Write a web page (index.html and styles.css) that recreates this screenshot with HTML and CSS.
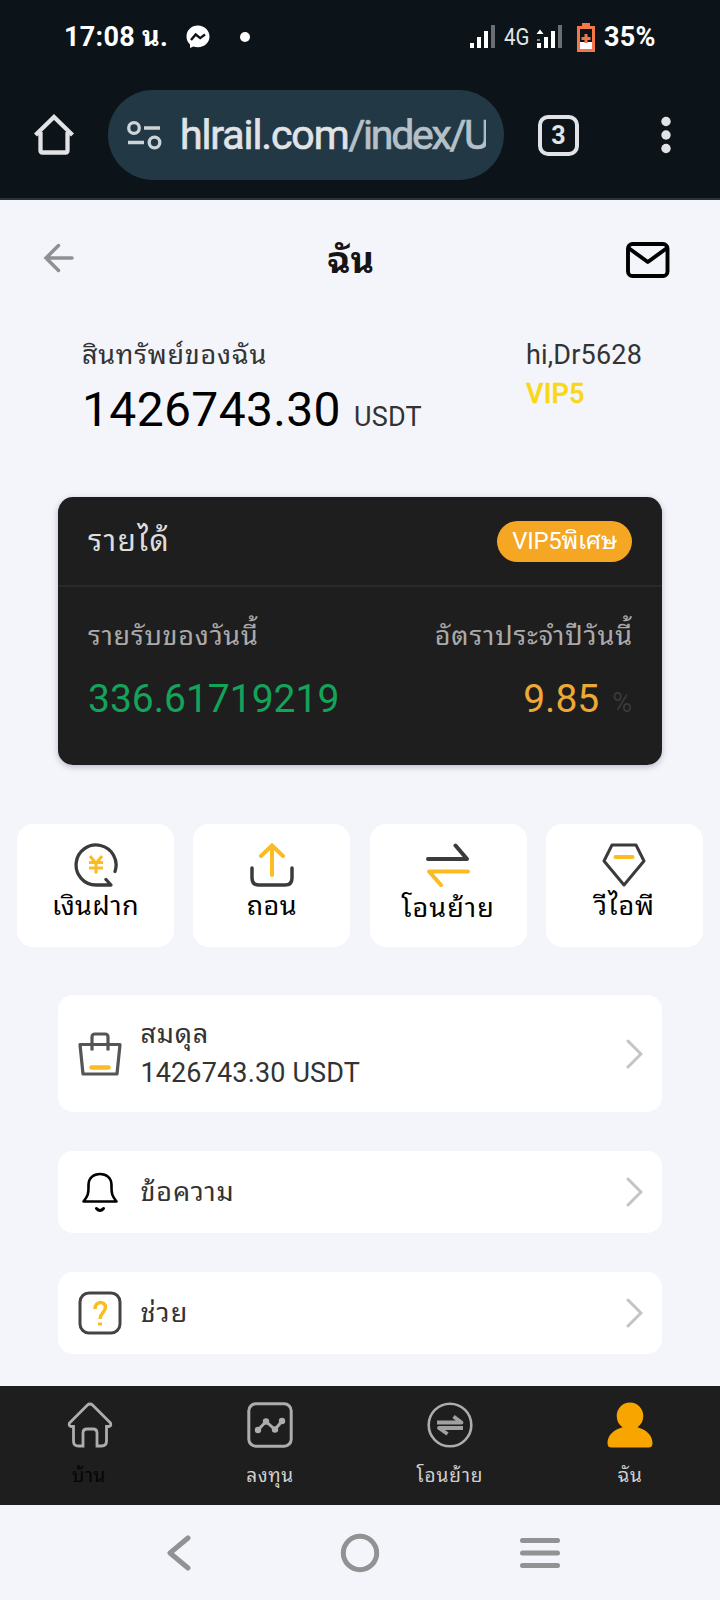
FILE: index.html
```html
<!DOCTYPE html>
<html lang="th">
<head>
<meta charset="utf-8">
<title>ฉัน</title>
<link rel="stylesheet" href="styles.css">
</head>
<body>
<div class="status">
  <span class="clock">17:08 น.</span>
  <svg class="messenger" width="24" height="24" viewBox="0 0 24 24"><path fill="#fff" d="M12 .5C5.400.500.5 5.200.5 11.500c0 3.300 1.300 6 3.500 8v3.500l3.300-1.500c1.400.500 3 .700 4.700.700 6.600 0 11.500-4.700 11.500-10.700S18.600.5 12 .5z"/><path d="M5 15l4.700-5.500 4.500 3.600L19 9.500" fill="none" stroke="#0c1419" stroke-width="2.400"/></svg>
  <i class="dot"></i>
  <svg class="sig1" width="26" height="24" viewBox="0 0 26 24"><g fill="#fff"><path d="M0 18h4v5H0zM7 12h4v11H7zM14 6h4v17h-4z"/><path fill="#6a6e72" d="M21 0h4v23h-4z"/></g></svg>
  <span class="net">4G</span>
  <svg class="sig2" width="27" height="24" viewBox="0 0 27 24"><g fill="#fff"><path d="M4 4.500l3.500 4.500h-7zM1 18h4v5H1zM8 12h4v11H8zM15 6h4v17h-4z"/><path d="M1 14.500h3v1H1z"/><path fill="#6a6e72" d="M22 0h4v23h-4z"/></g></svg>
  <svg class="battery" width="18" height="29" viewBox="0 0 18 29"><path fill="#f4774a" d="M5 0h8v3h5v26H0V3h5z"/><path fill="#0c1419" d="M3 6h12v13H3z"/><path fill="#fff" d="M3 19h12v7H3z"/><path fill="#f4774a" d="M7.500 11h3v3h3v3h-3v3h-3v-3h-3v-3h3z"/></svg>
  <span class="percent">35%</span>
</div>
<div class="toolbar">
  <svg class="chrome-home" width="42" height="42" viewBox="0 0 42 42"><path d="M2.500 21L21 3l18.500 18M7.500 18v18.500q0 2 2 2h23q2 0 2-2V18" fill="none" stroke="#e1e3e6" stroke-width="4.300"/></svg>
  <div class="address">
    <svg width="36" height="30" viewBox="0 0 36 30"><g fill="none" stroke="#cdd4d9" stroke-width="3.300"><circle cx="8" cy="8" r="5.300"/><path d="M18 8h16M2 22.500h16"/><circle cx="28.500" cy="22.500" r="5.300"/></g></svg>
    <div class="url">hlrail.com<span>/index/U</span></div>
  </div>
  <div class="tabs">3</div>
  <svg class="menu" width="12" height="38" viewBox="0 0 12 38"><g fill="#e1e3e6"><circle cx="6" cy="5.500" r="4.700"/><circle cx="6" cy="19" r="4.700"/><circle cx="6" cy="32.500" r="4.700"/></g></svg>
</div>

<main class="page">
  <header class="header">
    <svg class="back" width="32" height="30" viewBox="0 0 32 30"><path d="M15.500 2.500L3 15l12.500 12.500M3 15h26" fill="none" stroke="#8f9093" stroke-width="3.500" stroke-linecap="round"/></svg>
    <h1>ฉัน</h1>
    <svg class="mail" width="44" height="36" viewBox="0 0 44 36"><g fill="none" stroke="#000" stroke-width="3.900" stroke-linejoin="round"><rect x="2" y="2" width="39.500" height="32" rx="4.500"/><path d="M2.500 6l19.300 14L41 6"/></g></svg>
  </header>

  <section class="account">
    <div class="assets">
      <div class="label">สินทรัพย์ของฉัน</div>
      <div class="total">1426743.30<span>USDT</span></div>
    </div>
    <div class="user">
      <div>hi,Dr5628</div>
      <b>VIP5</b>
    </div>
  </section>

  <section class="income">
    <div class="income-top"><span class="income-title">รายได้</span><span class="badge">VIP5พิเศษ</span></div>
    <div class="income-body">
      <div><div class="caption cap-left">รายรับของวันนี้</div><div class="figure green">336.61719219</div></div>
      <div class="right"><div class="caption cap-right">อัตราประจำปีวันนี้</div><div class="figure amber">9.85<span>%</span></div></div>
    </div>
  </section>

  <nav class="actions">
    <a><svg width="44" height="44" viewBox="0 0 44 44"><g fill="none" stroke="#3b3b3b" stroke-width="3.300" stroke-linecap="round" stroke-linejoin="round"><path d="M41 28.500A20 20 0 1 0 22 42h15l-5-5.500"/></g><path d="M16 13l6 7.500 6-7.500M22 20v10.500M15 19.500h14M15 25h14" fill="none" stroke="#fbbc23" stroke-width="3"/></svg><span class="t1">เงินฝาก</span></a>
    <a><svg width="44" height="44" viewBox="0 0 44 44"><path d="M2 25v10q0 7 7 7h26q7 0 7-7V25" fill="none" stroke="#3b3b3b" stroke-width="3.500" stroke-linecap="round"/><path d="M22 32V3M11 13L22 2.500 33 13" fill="none" stroke="#fbbc23" stroke-width="4" stroke-linecap="round"/></svg><span class="t2">ถอน</span></a>
    <a><svg width="44" height="44" viewBox="0 0 44 44"><g fill="none" stroke-width="4" stroke-linecap="round" stroke-linejoin="round"><path stroke="#3b3b3b" d="M2 16h39L29.500 2.500"/><path stroke="#fbbc23" d="M42 28.500H3L15 42"/></g></svg><span class="t3">โอนย้าย</span></a>
    <a><svg width="44" height="44" viewBox="0 0 44 44"><path d="M10 2h24l8 16-20 24L2 18z" fill="none" stroke="#3b3b3b" stroke-width="3" stroke-linejoin="round"/><path d="M13.500 14h17" stroke="#fbbc23" stroke-width="4" stroke-linecap="round"/></svg><span class="t4">วีไอพี</span></a>
  </nav>

  <section class="rows">
    <a class="row tall">
      <svg class="icon" width="44" height="44" viewBox="0 0 44 44"><g fill="none" stroke="#555" stroke-width="3.200" stroke-linejoin="round"><path d="M2 12.500h40L39 42H5z"/><path d="M14 18.500V5q0-3 3-3h10q3 0 3 3v13.500"/></g><path d="M13.500 35.500h17" stroke="#fbbc23" stroke-width="4.500" stroke-linecap="round"/></svg>
      <div class="text"><div class="r1">สมดุล</div><div class="amount">1426743.30 USDT</div></div>
      <svg class="chevron" width="17" height="30" viewBox="0 0 17 30"><path d="M2 2l13 13L2 28"/></svg>
    </a>
    <a class="row">
      <svg class="icon" width="44" height="44" viewBox="0 0 44 44"><g fill="none" stroke="#000" stroke-width="2.600" stroke-linecap="round" stroke-linejoin="round"><path d="M5.500 31.500C10 26 10.500 23 10.500 18v-3C10.500 8 15.500 4 22 4s11.500 4 11.500 11v3c0 5 .500 8 5 13.500z"/><path d="M18.500 38.500q3.500 4 7 0" stroke-width="3"/></g></svg>
      <div class="text"><div class="r2">ข้อความ</div></div>
      <svg class="chevron" width="17" height="30" viewBox="0 0 17 30"><path d="M2 2l13 13L2 28"/></svg>
    </a>
    <a class="row">
      <svg class="icon" width="44" height="44" viewBox="0 0 44 44"><rect x="2" y="2" width="40" height="40" rx="9" fill="none" stroke="#444" stroke-width="3"/><path d="M17 18c0-8.500 10.500-8.500 10.500-1.500 0 4.500-5.500 5.500-5.500 11.500" fill="none" stroke="#fbbc23" stroke-width="3.500"/><path d="M20 31.500h4v3h-4z" fill="#fbbc23"/></svg>
      <div class="text"><div class="r3">ช่วย</div></div>
      <svg class="chevron" width="17" height="30" viewBox="0 0 17 30"><path d="M2 2l13 13L2 28"/></svg>
    </a>
  </section>
</main>

<nav class="tabbar">
  <a class="home"><svg width="46" height="46" viewBox="0 0 46 46"><path d="M23 2q1.500 0 2.500 1l18 18q1 3-1.500 3.500h-2.500V39q0 5-5 5h-4.500V31q0-4-4-4h-6q-4 0-4 4v13h-4.500q-5 0-5-5V24.500H4Q1.500 24 2.500 21l18-18q1-1 2.500-1z" fill="none" stroke="#adadad" stroke-width="2.800"/></svg><span>บ้าน</span></a>
  <a><svg width="46" height="46" viewBox="0 0 46 46"><rect x="1.800" y="1.800" width="42.400" height="42.400" rx="7" fill="none" stroke="#adadad" stroke-width="3"/><path d="M11 28l8-8.500 9 8 7-8.500" fill="none" stroke="#adadad" stroke-width="3"/><g fill="#adadad"><circle cx="11" cy="28" r="3.200"/><circle cx="19" cy="19.500" r="3.200"/><circle cx="28" cy="27.500" r="3.200"/><circle cx="35" cy="19" r="3.200"/></g></svg><span>ลงทุน</span></a>
  <a><svg width="46" height="46" viewBox="0 0 46 46"><circle cx="23" cy="23" r="21.300" fill="none" stroke="#adadad" stroke-width="2.600"/><path d="M10 20.500h24.500L26.500 14.500M36 26H12l8.500 6" fill="none" stroke="#a0a0a0" stroke-width="3.800" stroke-linejoin="round"/></svg><span class="wide">โอนย้าย</span></a>
  <a><svg width="46" height="46" viewBox="0 0 46 46"><path fill="#f9a500" d="M23 .5c7.500 0 13.300 6 13.300 13.300 0 5-2 9-5.800 11.500C40 28 45.500 34 45.500 41q0 4.500-4 4.500h-37q-4 0-4-4.500C.5 34 6 28 15.500 25.300c-3.800-2.500-5.800-6.500-5.800-11.500C9.700 6.500 15.500.5 23 .5z"/></svg><span>ฉัน</span></a>
</nav>
<div class="system">
  <svg width="24" height="36" viewBox="0 0 24 36"><path d="M21 3L3 18l18 15"/></svg>
  <svg width="40" height="40" viewBox="0 0 40 40"><circle cx="20" cy="20" r="16.700"/></svg>
  <svg width="40" height="32" viewBox="0 0 40 32"><path d="M2.500 3.500h35M2.500 16h35M2.500 28.500h35"/></svg>
</div>
</body>
</html>
```

FILE: styles.css
```css
* { box-sizing: border-box; }
body { margin: 0; width: 720px; height: 1600px; display: flex; flex-direction: column; overflow: hidden; background: #f4f5fb; color: #333; font-family: Roboto, "Noto Sans Thai Looped", "Droid Sans Thai", Loma, Garuda, "Noto Sans Thai", "Noto Sans", sans-serif; font-size: 27px; }
svg { display: block; flex: none; }
h1 { margin: 0; }
.status { height: 74px; flex: none; display: flex; align-items: center; background: #0c1419; color: #fff; font-size: 27px; font-weight: 700; padding-left: 64px; white-space: nowrap; }
.clock { width: 122px; height: 32px; line-height: 32px; letter-spacing: .3px; }
.dot { width: 10px; height: 10px; border-radius: 50%; background: #fff; margin-left: 30px; }
.sig1 { margin-left: 220px; }
.net { font-size: 24px; font-weight: 400; width: 26px; margin-left: 8px; color: #e4e6e8; transform: scaleX(.85); transform-origin: left; }
.sig2 { margin-left: 6px; }
.battery { margin-left: 14px; }
.percent { margin-left: 9px; letter-spacing: .3px; }
.toolbar { height: 126px; flex: none; display: flex; align-items: center; background: #0c1419; border-bottom: 2px solid #2b333a; padding: 0 0 2px 33px; }
.address { width: 396px; height: 90px; border-radius: 45px; background: #233845; margin-left: 33px; padding-left: 18px; display: flex; align-items: center; }
.url { width: 306px; margin-left: 18px; overflow: hidden; white-space: nowrap; color: #e1e3e6; font: 400 41px/56px Roboto, sans-serif; letter-spacing: -1.100px; -webkit-text-stroke: .7px; }
.url span { color: #b5c1c9; letter-spacing: -2.300px; }
.tabs { width: 41px; height: 41px; margin-left: 34px; border: 4px solid #e1e3e6; border-radius: 10px; color: #e1e3e6; font-weight: 700; font-size: 25px; line-height: 33px; text-align: center; }
.menu { margin-left: 81px; }
.page { height: 1186px; flex: none; }
.header { height: 120px; display: flex; justify-content: space-between; padding: 0 50px 0 43px; }
.back { margin-top: 43px; }
.mail { margin-top: 42px; }
.header h1 { font-size: 36px; line-height: 50px; height: 50px; margin-top: 36px; color: #151515; }
.account { height: 177px; display: flex; padding: 15px 0 0 82px; }
.assets { width: 444px; }
.label, .user div { height: 40px; line-height: 40px; white-space: nowrap; }
.label { letter-spacing: .75px; }
.user div { letter-spacing: .2px; }
.total { color: #000; font-size: 48px; line-height: 70px; height: 70px; letter-spacing: .35px; }
.total span { color: #333; font-size: 27px; margin-left: 13px; letter-spacing: .2px; }
.user b { display: block; color: #fad714; font-weight: 500; line-height: 38px; letter-spacing: .2px; -webkit-text-stroke: .4px; }
.income { height: 268px; margin: 0 58.400px; background: #1e1e1e; border-radius: 15px; box-shadow: 0 2px 6px rgba(50,30,60,.28); color: #ddd; }
.income-top { height: 90px; display: flex; justify-content: space-between; align-items: center; padding: 0 29.600px; border-bottom: 2px solid #292929; }
.income-title { font-size: 30px; height: 44px; line-height: 44px; letter-spacing: 1.400px; }
.badge { width: 135px; height: 41px; border-radius: 21px; background: #f5a623; color: #fff; font-size: 24px; line-height: 41px; text-align: center; letter-spacing: -.3px; white-space: nowrap; }
.income-body { display: flex; justify-content: space-between; padding: 28px 29.600px 0; }
.caption { height: 42px; line-height: 42px; color: #aaa; white-space: nowrap; }
.cap-left { letter-spacing: .75px; }
.cap-right { letter-spacing: .85px; margin-right: -.85px; }
.figure { font-size: 39px; height: 60px; line-height: 60px; margin-top: 12px; }
.green { color: #14a35a; }
.amber { color: #eda836; }
.amber span { color: #3a3a3a; font-size: 27px; margin-left: 13px; }
.right { text-align: right; }
.actions { height: 123px; margin-top: 59px; padding: 0 17px; display: grid; grid-template-columns: repeat(4, 157px); justify-content: space-between; }
.actions a { background: #fff; border-radius: 16px; display: flex; flex-direction: column; align-items: center; padding-top: 19px; color: #000; }
.actions span { height: 40px; line-height: 40px; margin-top: -1px; letter-spacing: .4px; white-space: nowrap; }
.actions .t3 { margin-top: 1px; letter-spacing: 1px; }
.actions .t4 { letter-spacing: .9px; }
.rows { margin: 48px 58.400px 0; display: flex; flex-direction: column; gap: 39px; }
.row { height: 82px; background: #fff; border-radius: 15px; display: flex; align-items: center; padding: 0 19px 0 19.600px; }
.row.tall { height: 117px; }
.text { margin-left: 18.400px; flex: 1; line-height: 39px; white-space: nowrap; }
.text div { height: 39px; }
.text .amount { letter-spacing: .15px; }
.r1 { letter-spacing: .8px; }
.r2 { letter-spacing: .9px; }
.r3 { letter-spacing: 1.200px; }
.chevron path { fill: none; stroke: #c4c4c6; stroke-width: 3; stroke-linecap: round; }
.tabbar { height: 119px; flex: none; background: #1e1e1e; display: grid; grid-template-columns: repeat(4, 1fr); color: #d0d0d0; }
.tabbar a { display: flex; flex-direction: column; align-items: center; padding-top: 16px; font-size: 19px; }
.tabbar span { height: 30px; line-height: 30px; margin-top: 13px; letter-spacing: .6px; white-space: nowrap; }
.tabbar .wide { letter-spacing: .9px; }
.tabbar .home span { color: #050505; margin-left: -2px; }
.system { height: 95px; flex: none; display: flex; align-items: center; padding: 0 0 0 167px; }
.system svg { fill: none; stroke: #929294; stroke-width: 5; stroke-linecap: round; stroke-linejoin: round; }
.system svg + svg { margin-left: 149px; }
.system svg + svg + svg { margin-left: 140px; }
```
